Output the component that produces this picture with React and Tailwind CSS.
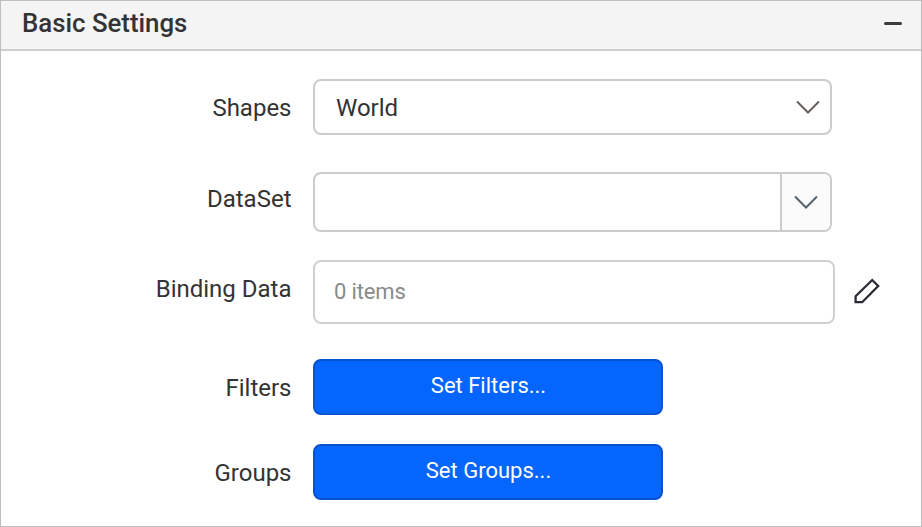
function Label({ children, className }) {
  return <label className={"w-[291.5px] shrink-0 text-right whitespace-nowrap text-[24px] leading-[28px] text-[#333] " + className}>{children}</label>;
}

export default function App() {
  return (
    <div className="flex h-[527px] w-[922px] flex-col overflow-hidden border border-[#bdbdbd] bg-white font-['Roboto',sans-serif]">
      <header className="flex h-[50px] shrink-0 items-center justify-between border-b-2 border-[#cfcfcf] bg-[#f4f4f4] pr-[19px] pb-[2px] pl-[21px]">
        <h1 className="pb-[2px] text-[25.8px] leading-[30px] font-medium text-[#333]">Basic Settings</h1>
        <div className="mb-px h-[3px] w-[18px] rounded-full bg-[#3c3c3c]" />
      </header>
      <main className="-ml-px flex flex-col pt-[28px]">
        <div className="flex h-[56px]">
          <Label className="pt-[15px]">Shapes</Label>
          <div className="ml-[21.5px] flex h-[56px] w-[519px] items-center justify-between rounded-[8px] border-2 border-[#ccc] pr-[10px] pl-[21px]">
            <span className="pt-[2px] text-[24px] leading-[28px] text-[#333]">World</span>
            <svg width="24" height="14" viewBox="0 0 24 14" fill="none" stroke="#66605c" strokeWidth="2"><path d="M1 1.5 12 12.5 23 1.5" /></svg>
          </div>
        </div>
        <div className="mt-[37px] flex h-[60px]">
          <Label className="pt-[13px]">DataSet</Label>
          <div className="ml-[21.5px] flex w-[519px] justify-end overflow-hidden rounded-[8px] border-2 border-[#ccc]">
            <div className="flex w-[50px] items-center justify-center border-l-2 border-[#ccc] bg-[#fbfbfb] pr-px">
              <svg width="24" height="14" viewBox="0 0 24 14" fill="none" stroke="#55616a" strokeWidth="2"><path d="M1 1.5 12 12.5 23 1.5" /></svg>
            </div>
          </div>
        </div>
        <div className="mt-[28px] flex h-[64px]">
          <Label className="pt-[15px]">Binding Data</Label>
          <div className="ml-[21.5px] flex w-[522px] items-center rounded-[8px] border-2 border-[#d0d0d0] pb-[2px] pl-[19px] text-[22px] tracking-[-0.15px] text-[#8a8a8a]">0 items</div>
          <svg className="mt-[17px] ml-[18px]" width="28" height="28" viewBox="0 0 28 28" fill="none" stroke="#2d2933" strokeWidth="2.3"><path d="M2.6 19.2 19.2 3 25.2 9 9.2 25.2H2.6Z" /></svg>
        </div>
        <div className="mt-[35px] flex h-[56px]">
          <Label className="pt-[15px]">Filters</Label>
          <button className="ml-[21.5px] w-[350px] rounded-[8px] border-2 border-[#0552d0] bg-[#0565ff] pb-[3px] pl-px text-[22px] text-white">Set Filters...</button>
        </div>
        <div className="mt-[29px] flex h-[56px]">
          <Label className="pt-[15px]">Groups</Label>
          <button className="ml-[21.5px] w-[350px] rounded-[8px] border-2 border-[#0552d0] bg-[#0565ff] pb-[3px] pl-px text-[22px] text-white">Set Groups...</button>
        </div>
      </main>
    </div>
  );
}
